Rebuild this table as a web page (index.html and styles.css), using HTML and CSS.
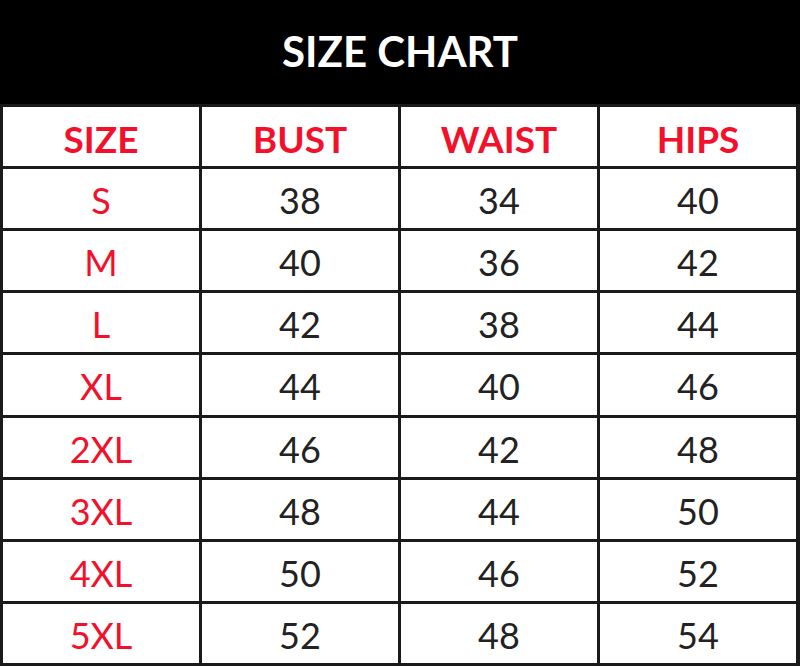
FILE: index.html
```html
<!DOCTYPE html>
<html>
<head>
<meta charset="utf-8">
<link rel="stylesheet" href="styles.css">
</head>
<body>
<div class="chart">
  <div class="title">SIZE CHART</div>
  <div class="table">
    <div class="cell head">SIZE</div><div class="cell head">BUST</div><div class="cell head">WAIST</div><div class="cell head">HIPS</div>
    <div class="cell size">S</div><div class="cell">38</div><div class="cell">34</div><div class="cell">40</div>
    <div class="cell size">M</div><div class="cell">40</div><div class="cell">36</div><div class="cell">42</div>
    <div class="cell size">L</div><div class="cell">42</div><div class="cell">38</div><div class="cell">44</div>
    <div class="cell size">XL</div><div class="cell">44</div><div class="cell">40</div><div class="cell">46</div>
    <div class="cell size">2XL</div><div class="cell">46</div><div class="cell">42</div><div class="cell">48</div>
    <div class="cell size">3XL</div><div class="cell">48</div><div class="cell">44</div><div class="cell">50</div>
    <div class="cell size">4XL</div><div class="cell">50</div><div class="cell">46</div><div class="cell">52</div>
    <div class="cell size">5XL</div><div class="cell">52</div><div class="cell">48</div><div class="cell">54</div>
  </div>
</div>
</body>
</html>
```
FILE: styles.css
```css
html, body {
  margin: 0;
  padding: 0;
  background: #fff;
}
.chart {
  width: 800px;
  height: 666px;
  display: flex;
  flex-direction: column;
  font-family: Lato, "Open Sans", sans-serif;
}
.title {
  height: 104px;
  flex: none;
  background: #000;
  color: #fff;
  font-size: 42px;
  font-weight: 700;
  display: flex;
  align-items: center;
  justify-content: center;
  padding-bottom: 2px;
  box-sizing: border-box;
}
.table {
  flex: 1;
  display: grid;
  grid-template-columns: repeat(4, 1fr);
  grid-template-rows: repeat(9, 1fr);
  gap: 3px;
  padding: 3px 4px 3px 3px;
  background: #1a1a1a;
}
.cell {
  background: #fff;
  display: flex;
  align-items: center;
  justify-content: center;
  font-size: 36px;
  color: #222;
  padding-top: 3px;
}
.head {
  color: #f2102a;
  font-weight: 700;
  font-size: 37px;
}
.size {
  color: #f2102a;
}
```
